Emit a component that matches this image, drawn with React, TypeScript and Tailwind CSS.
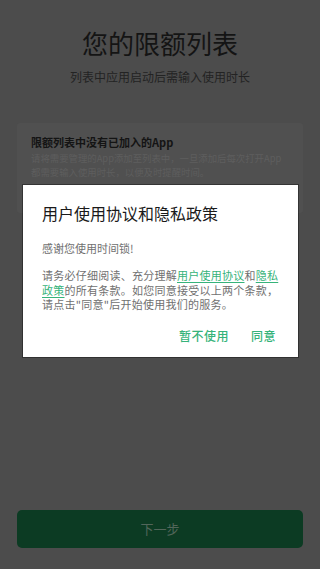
import React from 'react';

const cjk = { fontFamily: '"Noto Sans CJK SC", "Noto Sans", sans-serif' };

function PrivacyDialog() {
  return (
    <div className="absolute left-[23px] top-[185px] w-[275px] bg-white shadow-[0_0_0_1px_rgba(0,0,0,0.35)] px-[19px] pt-[16px] pb-[12px]">
      <h3 className="text-[16px] leading-[24px] text-[#1a1a1a]">用户使用协议和隐私政策</h3>
      <p className="mt-[16px] text-[11px] leading-[15px] text-[#707070]">感谢您使用时间锁!</p>
      <p className="mt-[12px] whitespace-nowrap text-[11px] leading-[14.5px] tracking-[0.25px] text-[#707070]">
        请务必仔细阅读、充分理解
        <span className="text-[#36b37a] underline underline-offset-2">用户使用协议</span>
        和
        <span className="text-[#36b37a] underline underline-offset-2">隐私</span>
        <br />
        <span className="text-[#36b37a] underline underline-offset-2">政策</span>
        的所有条款。如您同意接受以上两个条款，
        <br />
        请点击"同意"后开始使用我们的服务。
      </p>
      <div className="mt-[15px] flex justify-end gap-[22px] pr-[3px]">
        <button className="text-[12px] leading-[18px] font-medium tracking-[0.5px] text-[#36b37a]">暂不使用</button>
        <button className="text-[12px] leading-[18px] font-medium tracking-[0.5px] text-[#36b37a]">同意</button>
      </div>
    </div>
  );
}

export default function App() {
  return (
    <div className="relative h-[569px] w-[320px] overflow-hidden bg-[#4c4c4c]" style={cjk}>
      <div className="flex h-full flex-col">
        <h1 className="mt-[27px] text-center text-[26px] leading-[32px] text-[#141414]">您的限额列表</h1>
        <p className="mt-[10px] text-center text-[12px] leading-[16px] text-[#232323]">列表中应用启动后需输入使用时长</p>

        <div className="mx-[17px] mt-[38px] h-[90px] rounded-[3px] bg-[#505050] px-[14px] pt-[11px]">
          <h2 className="text-[11px] leading-[16px] font-bold text-[#141414]">限额列表中没有已加入的App</h2>
          <p className="mt-[1px] whitespace-nowrap text-[9.4px] leading-[14px] text-[#5e5e5e]">
            请将需要管理的App添加至列表中，一旦添加后每次打开App
            <br />
            都需要输入使用时长，以便及时提醒时间。
          </p>
        </div>

        <div className="flex-1" />

        <button className="mx-[17px] mb-[21px] h-[38px] rounded-[5px] bg-[#0c3b23] text-[13px] text-[#52665a]">
          下一步
        </button>
      </div>

      <PrivacyDialog />
    </div>
  );
}
